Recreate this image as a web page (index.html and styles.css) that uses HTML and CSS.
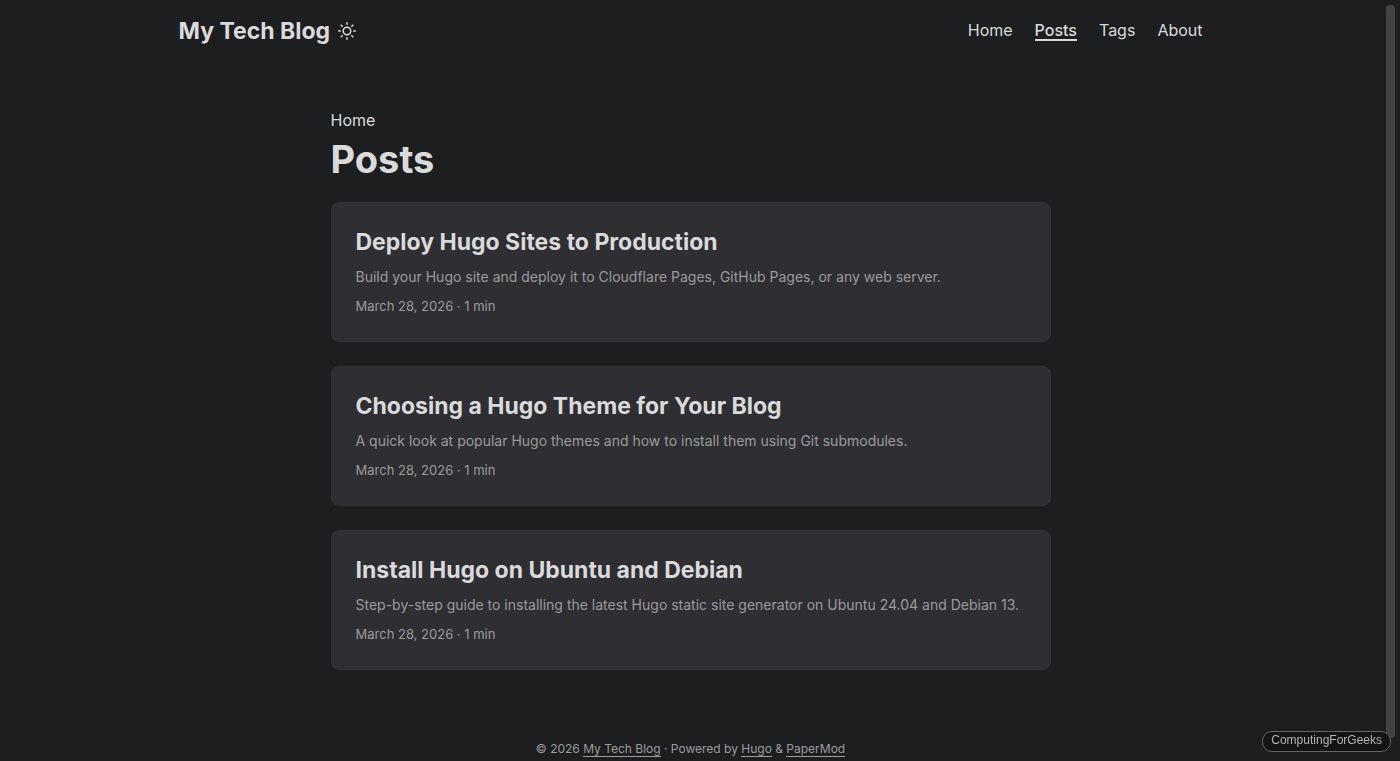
FILE: index.html
```html
<!DOCTYPE html>
<html lang="en">
<head>
    <meta charset="UTF-8">
    <meta name="viewport" content="width=device-width, initial-scale=1.0">
    <title>Posts | My Tech Blog</title>
    <link rel="stylesheet" href="styles.css">
</head>
<body>
    <header class="header">
        <nav class="nav">
            <div class="logo">
                <a href="#">My Tech Blog</a>
                <button class="theme-toggle" type="button" aria-label="Toggle theme">
                    <svg width="18" height="18" viewBox="0 0 24 24" fill="none" stroke="currentColor" stroke-width="2" stroke-linecap="round" stroke-linejoin="round">
                        <circle cx="12" cy="12" r="5"></circle>
                        <line x1="12" y1="1" x2="12" y2="3"></line>
                        <line x1="12" y1="21" x2="12" y2="23"></line>
                        <line x1="4.22" y1="4.22" x2="5.64" y2="5.64"></line>
                        <line x1="18.36" y1="18.36" x2="19.78" y2="19.78"></line>
                        <line x1="1" y1="12" x2="3" y2="12"></line>
                        <line x1="21" y1="12" x2="23" y2="12"></line>
                        <line x1="4.22" y1="19.78" x2="5.64" y2="18.36"></line>
                        <line x1="18.36" y1="5.64" x2="19.78" y2="4.22"></line>
                    </svg>
                </button>
            </div>
            <ul class="menu">
                <li><a href="#">Home</a></li>
                <li><a href="#" class="active">Posts</a></li>
                <li><a href="#">Tags</a></li>
                <li><a href="#">About</a></li>
            </ul>
        </nav>
    </header>

    <main class="main">
        <div class="page-header">
            <div class="breadcrumbs"><a href="#">Home</a></div>
            <h1>Posts</h1>
        </div>

        <article class="post-entry">
            <h2><a href="#">Deploy Hugo Sites to Production</a></h2>
            <p class="entry-content">Build your Hugo site and deploy it to Cloudflare Pages, GitHub Pages, or any web server.</p>
            <div class="entry-footer">March 28, 2026 · 1 min</div>
        </article>

        <article class="post-entry">
            <h2><a href="#">Choosing a Hugo Theme for Your Blog</a></h2>
            <p class="entry-content">A quick look at popular Hugo themes and how to install them using Git submodules.</p>
            <div class="entry-footer">March 28, 2026 · 1 min</div>
        </article>

        <article class="post-entry">
            <h2><a href="#">Install Hugo on Ubuntu and Debian</a></h2>
            <p class="entry-content">Step-by-step guide to installing the latest Hugo static site generator on Ubuntu 24.04 and Debian 13.</p>
            <div class="entry-footer">March 28, 2026 · 1 min</div>
        </article>
    </main>

    <footer class="footer">
        <span>© 2026 <a href="#">My Tech Blog</a></span> ·
        <span>Powered by <a href="#">Hugo</a> &amp; <a href="#">PaperMod</a></span>
    </footer>

    <div class="scroll-thumb"></div>
    <div class="watermark">ComputingForGeeks</div>
</body>
</html>
```
FILE: styles.css
```css
:root {
    --theme: #1d1e20;
    --entry: #2e2e33;
    --primary: #dadadb;
    --secondary: #9b9c9d;
    --border: #333333;
}

* {
    box-sizing: border-box;
}

body {
    margin: 0;
    padding-right: 19px;
    min-height: 100vh;
    display: flex;
    flex-direction: column;
    background: var(--theme);
    color: var(--primary);
    font-family: Inter, sans-serif;
    font-size: 16px;
    line-height: 24px;
}

a {
    color: inherit;
    text-decoration: none;
}

h1, h2, p, ul {
    margin: 0;
    padding: 0;
}

/* Header */
.nav {
    display: flex;
    justify-content: space-between;
    align-items: center;
    max-width: 1072px;
    height: 60px;
    margin: 0 auto;
    padding: 0 24px;
}

.logo {
    display: flex;
    align-items: center;
    gap: 8px;
    padding-top: 2px;
    font-size: 23px;
    font-weight: 700;
}

.theme-toggle {
    display: flex;
    padding: 0;
    border: none;
    background: none;
    color: inherit;
    cursor: pointer;
}

.menu {
    display: flex;
    align-items: baseline;
    gap: 22px;
    list-style: none;
}

.menu a {
    display: block;
}

.menu .active {
    font-weight: 500;
    line-height: 18px;
    border-bottom: 2px solid;
}

/* Post list */
.main {
    flex: 1;
    width: 100%;
    max-width: 768px;
    margin: 0 auto;
    padding: 48px 24px 24px;
}

.page-header {
    margin-bottom: 16px;
}

.page-header h1 {
    font-size: 38px;
    line-height: 54px;
}

.post-entry {
    margin-bottom: 24px;
    padding: 24px;
    background: var(--entry);
    border: 1px solid var(--border);
    border-radius: 8px;
}

.post-entry h2 {
    font-size: 23px;
    line-height: 31px;
}

.entry-content {
    margin: 8px 0;
    color: var(--secondary);
    font-size: 14px;
    line-height: 22px;
}

.entry-footer {
    color: var(--secondary);
    font-size: 13px;
    line-height: 21px;
}

/* Footer */
.footer {
    padding: 0 24px;
    color: var(--secondary);
    font-size: 12px;
    text-align: center;
}

.footer a {
    border-bottom: 1px solid;
}

/* Overlays */
.scroll-thumb {
    position: fixed;
    top: 5px;
    right: 5px;
    bottom: 23px;
    width: 9px;
    border-radius: 4px;
    background: #434345;
}

.watermark {
    position: fixed;
    right: 9px;
    bottom: 9px;
    padding: 0 8px 2px;
    border: 1px solid #636466;
    border-radius: 10px;
    background: #131416;
    color: #b4b4b5;
    font-family: "Liberation Sans", Arial, sans-serif;
    font-size: 12px;
    line-height: 17px;
}
```
